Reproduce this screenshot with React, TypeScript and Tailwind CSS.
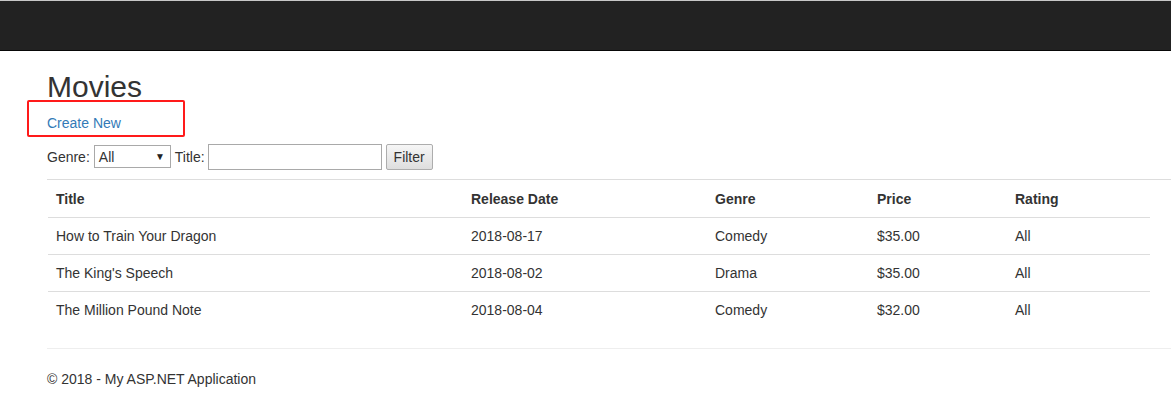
const movies = [
  { title: "How to Train Your Dragon", date: "2018-08-17", genre: "Comedy", price: "$35.00", rating: "All" },
  { title: "The King's Speech", date: "2018-08-02", genre: "Drama", price: "$35.00", rating: "All" },
  { title: "The Million Pound Note", date: "2018-08-04", genre: "Comedy", price: "$32.00", rating: "All" },
];

const cols = ["w-[415px]", "w-[244px]", "w-[162px]", "w-[138px]", ""];

export default function App() {
  return (
    <div className="min-h-[412px] bg-white font-['Liberation_Sans',Arial,sans-serif] text-[14px] leading-[20px] text-[#333]">
      <div className="h-px bg-[#c8c8c8]" />
      <div className="h-[50px] border-b border-[#080808] bg-[#222]" />

      <div className="relative pt-[19px] pl-[47px]">
        <h2 className="mb-[10px] text-[30px] font-normal leading-[33px]">Movies</h2>
        <p className="mb-[10px]">
          <a className="text-[#337ab7]" href="#">
            Create New
          </a>
        </p>
        <div className="absolute left-[27px] top-[49px] h-[37px] w-[158px] rounded-[2px] border-2 border-[#ff1a1a]" />

        <div className="flex h-[27px] items-center">
          <span>Genre:</span>
          <div className="ml-[4px] flex h-[23px] w-[77px] items-center justify-between border border-[#a9a9a9] bg-white pl-[4px] pr-[5px]">
            <span>All</span>
            <span className="text-[10px] leading-none text-[#222]">▼</span>
          </div>
          <span className="ml-[4px]">Title:</span>
          <div className="ml-[3px] h-[26px] w-[174px] border border-[#a9a9a9] bg-white" />
          <button
            type="button"
            className="ml-[4px] h-[26px] w-[47px] rounded-[2px] border border-[#adadad] bg-[linear-gradient(#f6f6f6,#dedede)] text-[14px] text-[#333]"
          >
            Filter
          </button>
        </div>

        <div className="mt-[9px] border-t border-[#ddd]">
          <table className="ml-px w-[1102px] border-collapse">
            <thead>
              <tr>
                {["Title", "Release Date", "Genre", "Price", "Rating"].map((h, i) => (
                  <th key={h} className={`${cols[i]} h-[37px] px-[8px] pt-px text-left align-middle font-bold`}>
                    {h}
                  </th>
                ))}
              </tr>
            </thead>
            <tbody>
              {movies.map((m) => (
                <tr key={m.title} className="border-t border-[#ddd]">
                  {[m.title, m.date, m.genre, m.price, m.rating].map((v, i) => (
                    <td key={i} className="h-[37px] px-[8px] pt-px align-middle">
                      {v}
                    </td>
                  ))}
                </tr>
              ))}
            </tbody>
          </table>
        </div>

        <div className="mt-[20px] border-t border-[#eee]" />
        <footer className="mt-[20px]">
          <p>© 2018 - My ASP.NET Application</p>
        </footer>
      </div>
    </div>
  );
}
